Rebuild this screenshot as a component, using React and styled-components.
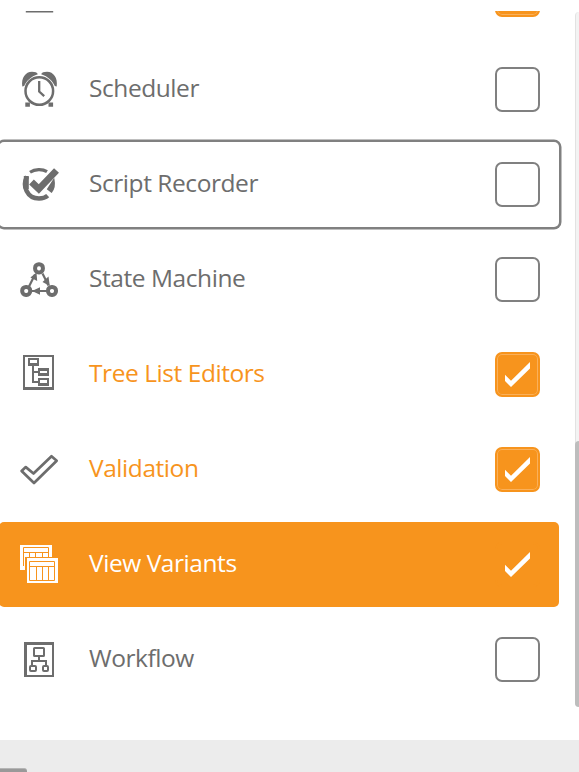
import React, { useState } from 'react';
import styled, { createGlobalStyle, css } from 'styled-components';

const ORANGE = '#f7941d';
const GREY = '#6d6d6d';

const ICONS = {
  page: <path d='M16.5 46.7V14.5H42.5V46.7z' fill='none' stroke='currentColor' strokeWidth='1.4' />,
  scheduler: (
    <>
      <path d='M12.3 26.5C11 18 15.5 11.8 22 11.8c3 0 5.2.8 5.8 2.4C21 16.5 16 21 14.2 26z' />
      <path d='M46.7 26.5C48 18 43.5 11.8 37 11.8c-3 0-5.2.8-5.8 2.4C38 16.5 43 21 44.8 26z' />
      <circle cx='29.3' cy='31' r='13.8' fill='none' stroke='currentColor' strokeWidth='2.5' />
      <path d='M29.2 21v10.5l5 4.6' fill='none' stroke='currentColor' strokeWidth='2.3' />
      <path d='M15.3 42.6h4.6v4.2h-4.6zM38.5 42.6h4.6v4.2h-4.6z' />
    </>
  ),
  recorder: (
    <g fill='none' stroke='currentColor'>
      <path d='M20 17.2C25 13.8 32.5 13.8 37 16.6' strokeWidth='3.2' />
      <path d='M17 21.5C12 31 17 43.5 29 43.5c3.5 0 6.5-.8 8.7-2.8' strokeWidth='4.5' />
      <path d='M16.3 21v13' strokeWidth='5' />
      <path d='M43.8 24.5c1 5 .2 9.5-2.3 12.5l-3.8-3z' fill='currentColor' strokeWidth='1.4' />
      <path d='M21.5 27l7.3 7L46.5 15.5' strokeWidth='6.8' />
    </g>
  ),
  state: (
    <>
      <g fill='none' stroke='currentColor' strokeWidth='4'>
        <rect x='25.1' y='14.2' width='7.8' height='8.2' rx='3.7' />
        <rect x='12.2' y='36.9' width='8' height='8' rx='3.7' />
        <rect x='38' y='36.9' width='8' height='8' rx='3.7' />
      </g>
      <path
        d='M19 36.5l6-12M32.5 23.5l6 12M37 41H22'
        fill='none'
        stroke='currentColor'
        strokeWidth='2.2'
      />
      <path d='M26.5 22.5l.7 8.5-6.8-3.5zM39.8 36l-7.3-4 6-5.4zM22 41l8-3.8v7.6z' />
    </>
  ),
  tree: (
    <path
      fillRule='evenodd'
      d='M13 10h31v35H13zM15 12v30h27V12zM18 13h11v8h-5v5h4v-3h11v8H28v-3h-4v8h4v-3h11v8H28v-3h-6V21h-4zM20 15v3h7v-3zM30 26v2h7v-2zM30 35v3h7v-3z'
    />
  ),
  validation: (
    <path
      d='M11.6 31l4.2-3.9 7.7 6.4 18-17.3 5.2 4.5L24 43z'
      fill='none'
      stroke='currentColor'
      strokeWidth='2.7'
      strokeLinejoin='round'
    />
  ),
  variants: (
    <>
      <path d='M10 10h32v25H10z' />
      <g fill='none' stroke={ORANGE}>
        <path d='M13.5 31V12.5h25V31M13.5 17.5h25M19.5 17.5V31M25.5 17.5V31M32.5 17.5V31' />
      </g>
      <path d='M15 22h34v27H15z' fill={ORANGE} />
      <path d='M17 23h31v25H17z' />
      <path
        d='M19.5 26.5h25v19h-25zM19.5 31.5h25M26.5 31.5v14M32.5 31.5v14M38.5 31.5v14'
        fill='none'
        stroke={ORANGE}
      />
    </>
  ),
  workflow: (
    <>
      <path fillRule='evenodd' d='M14 12h30v35H14zM17 15v30h25V15z' />
      <g fill='none' stroke='currentColor' strokeWidth='2'>
        <rect x='24' y='18' width='10' height='8' rx='.6' />
        <rect x='20' y='36' width='6' height='5' rx='1' />
        <rect x='33' y='36' width='5' height='5' rx='1' />
        <path d='M29 26v5M22 36v-5h14v5' />
      </g>
    </>
  ),
};

const MODULES = [
  { id: 'page', checked: true },
  { id: 'scheduler', label: 'Scheduler' },
  { id: 'recorder', label: 'Script Recorder', focused: true },
  { id: 'state', label: 'State Machine' },
  { id: 'tree', label: 'Tree List Editors', checked: true },
  { id: 'validation', label: 'Validation', checked: true },
  { id: 'variants', label: 'View Variants', checked: true, selected: true },
  { id: 'workflow', label: 'Workflow' },
];

export default function App() {
  const [modules, setModules] = useState(MODULES);

  const toggle = (id) =>
    setModules(
      modules.map((m) => (m.id === id ? { ...m, checked: !m.checked } : m))
    );

  return (
    <>
      <GlobalStyle />
      <Page>
        <Content>
          <List>
            {modules.map((m) => (
              <Row
                key={m.id}
                $focused={m.focused}
                $selected={m.selected}
                onClick={() => toggle(m.id)}
              >
                <Icon viewBox='0 0 60 60'>{ICONS[m.id]}</Icon>
                <Label $active={m.checked && !m.selected}>{m.label}</Label>
                <Checkbox $checked={m.checked} $flat={m.selected}>
                  {m.checked && (
                    <Check viewBox='0 0 45 45'>
                      <path d='M10 22.7l6 6L35 10v6.5L16 35l-6-6z' />
                    </Check>
                  )}
                </Checkbox>
              </Row>
            ))}
          </List>
          <Track>
            <Thumb />
          </Track>
        </Content>
        <Footer>
          <FooterButton />
        </Footer>
      </Page>
    </>
  );
}

const GlobalStyle = createGlobalStyle`
  * {
    box-sizing: border-box;
  }

  body {
    margin: 0;
    background: #fff;
    overflow: hidden;
  }
`;

const Page = styled.div`
  width: 579px;
  height: 772px;
  padding-top: 11px;
  display: flex;
  flex-direction: column;
  overflow: hidden;
  background: #fff;
  font-family: 'Open Sans', 'Noto Sans', sans-serif;
`;

const Content = styled.div`
  display: flex;
  justify-content: space-between;
  height: 729px;
  overflow: hidden;
`;

const List = styled.div`
  width: 562px;
  margin-top: -64px;
`;

const Row = styled.div`
  display: flex;
  align-items: center;
  height: 85px;
  margin: 5px 3px 10px -1px;
  padding: 0 19px 0 11px;
  border-radius: 5px;
  color: ${GREY};
  cursor: pointer;

  ${({ $focused }) =>
    $focused &&
    css`
      box-shadow: 0 0 0 2.5px #808080;
    `}

  ${({ $selected }) =>
    $selected &&
    css`
      background: ${ORANGE};
      color: #fff;
    `}
`;

const Icon = styled.svg`
  width: 60px;
  height: 60px;
  margin-top: 1px;
  flex: none;
  fill: currentColor;
`;

const Label = styled.span`
  flex: 1;
  margin: -3px 0 0 19px;
  font-size: 24.5px;
  line-height: 36px;
  letter-spacing: -0.44px;
  white-space: nowrap;
  ${({ $active }) => $active && `color: ${ORANGE};`}
`;

const Checkbox = styled.span`
  width: 45px;
  height: 45px;
  flex: none;
  border: 2px solid #808080;
  border-radius: 7px;

  ${({ $checked, $flat }) =>
    $checked &&
    css`
      border-color: ${ORANGE};
      background: ${ORANGE};
      box-shadow: ${$flat ? 'none' : 'inset 0 0 0 1px #fab05a'};
    `}
`;

const Check = styled.svg`
  display: block;
  width: 45px;
  height: 45px;
  margin: -2px;
  fill: #fff;
`;

const Track = styled.div`
  display: flex;
  flex-direction: column;
  justify-content: flex-end;
  width: 4px;
  height: 695px;
  margin-top: 1px;
  border-left: 1px solid #e2e2e2;
  border-radius: 4px 0 0 4px;
  background: #f3f3f3;
`;

const Thumb = styled.div`
  height: 266px;
  margin-left: -1px;
  border-radius: 4px 0 0 4px;
  background: #bdbdbd;
`;

const Footer = styled.div`
  display: flex;
  align-items: flex-end;
  height: 32px;
  background: #ececec;
`;

const FooterButton = styled.div`
  width: 27px;
  height: 4px;
  border-top: 1px solid #b5b5b5;
  border-radius: 0 3px 0 0;
  background: #999;
`;
